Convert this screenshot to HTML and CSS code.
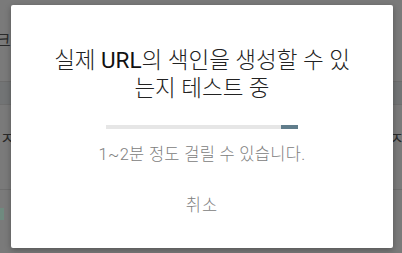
FILE: index.html
```html
<!DOCTYPE html>
<html lang="ko">
<head>
<meta charset="utf-8">
<link rel="stylesheet" href="styles.css">
</head>
<body>
<div class="page">
  <div class="row row-top"><span class="edge-l">크</span></div>
  <div class="band"></div>
  <div class="row row-mid"><span class="edge-l">|ㅈ</span><span class="edge-r">ㅈ</span></div>
  <div class="row row-bot"><span class="chip"></span></div>
</div>
<div class="dialog" role="dialog">
  <h1 class="title">실제 <span class="latin">URL</span>의 색인을 생성할 수 있<br>는지 테스트 중</h1>
  <div class="progress"><div class="progress-bar"></div></div>
  <p class="note">1~2분 정도 걸릴 수 있습니다.</p>
  <button class="cancel">취소</button>
</div>
</body>
</html>
```
FILE: styles.css
```css
html, body {
  margin: 0;
  padding: 0;
}
body {
  width: 402px;
  height: 253px;
  overflow: hidden;
  background: #7a7a7a;
  font-family: Roboto, "Noto Sans CJK KR", sans-serif;
  position: relative;
}
.page {
  display: flex;
  flex-direction: column;
  height: 253px;
}
.row {
  display: flex;
  justify-content: space-between;
  align-items: center;
  color: #2a2a2a;
  font-size: 16px;
  line-height: 19px;
}
.row-top {
  height: 81px;
  border-bottom: 1px solid #6c6c6c;
}
.band {
  height: 22px;
  background: #727475;
}
.row-mid {
  height: 86px;
  box-sizing: border-box;
  align-items: flex-start;
  padding-top: 24px;
  border-top: 1px solid #6e6e6e;
  border-bottom: 1px solid #6e6e6e;
}
.row-bot {
  flex: 1;
  align-items: flex-start;
  padding-top: 18px;
}
.chip {
  width: 4px;
  height: 12px;
  background: #6f8a7f;
}
.edge-l {
  margin-left: -4px;
}
.edge-r {
  margin-right: -2px;
}
.dialog {
  position: absolute;
  left: 11px;
  top: 5px;
  width: 382px;
  height: 243px;
  background: #fff;
  border-radius: 2px;
  box-shadow: 0 2px 6px rgba(0,0,0,0.3);
  display: flex;
  flex-direction: column;
  align-items: center;
  box-sizing: border-box;
  padding-top: 41px;
}
.title {
  margin: 0;
  font-size: 22.5px;
  font-weight: 300;
  line-height: 28px;
  color: #222;
  text-align: center;
}
.latin {
  font-weight: 400;
  color: #111;
}
.progress {
  margin-top: 23px;
  width: 192px;
  height: 4px;
  background: #e6e6e6;
  display: flex;
  justify-content: flex-end;
}
.progress-bar {
  width: 17px;
  height: 4px;
  background: #607d8b;
}
.note {
  margin: 15px 0 0;
  font-size: 16.5px;
  font-weight: 300;
  color: #808080;
  line-height: 22px;
  letter-spacing: 0.3px;
}
.cancel {
  margin-top: 26px;
  border: none;
  background: none;
  padding: 4px 8px;
  font-family: inherit;
  font-size: 16.5px;
  line-height: 20px;
  font-weight: 300;
  color: #808080;
  letter-spacing: 1px;
}
```
